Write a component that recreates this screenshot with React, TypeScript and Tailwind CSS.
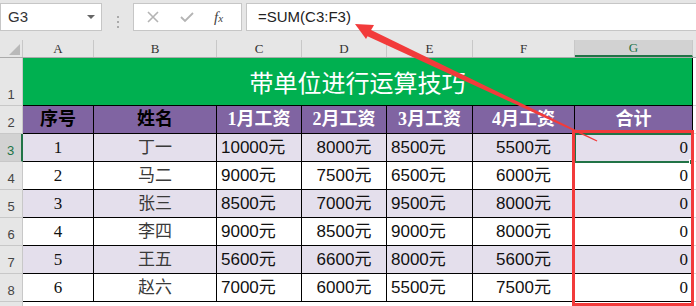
import React from 'react';

const cols = [
  { id: 'A', w: 'w-[71px]' },
  { id: 'B', w: 'w-[123px]' },
  { id: 'C', w: 'w-[85px]' },
  { id: 'D', w: 'w-[85px]' },
  { id: 'E', w: 'w-[86px]' },
  { id: 'F', w: 'w-[102px]' },
  { id: 'G', w: 'w-[118px]' },
];

const heads = [
  { text: '序号', color: 'text-black' },
  { text: '姓名', color: 'text-black' },
  { text: '1月工资', color: 'text-white' },
  { text: '2月工资', color: 'text-white' },
  { text: '3月工资', color: 'text-white' },
  { text: '4月工资', color: 'text-white' },
  { text: '合计', color: 'text-white' },
];

const rows = [
  ['1', '丁一', '10000元', '8000元', '8500元', '5500元'],
  ['2', '马二', '9000元', '7500元', '6500元', '6000元'],
  ['3', '张三', '8500元', '7000元', '9500元', '8000元'],
  ['4', '李四', '9000元', '8500元', '9000元', '8000元'],
  ['5', '王五', '5600元', '6600元', '8000元', '5600元'],
  ['6', '赵六', '7000元', '6000元', '5500元', '7500元'],
];

const serif = "font-['Liberation_Serif','Noto_Sans_CJK_SC',serif]";
const sans = "font-['Liberation_Sans','Noto_Sans_CJK_SC',sans-serif]";

function RowHead({ n, h, active }: { n: string; h: string; active?: boolean }) {
  return (
    <div
      className={`w-[23px] ${h} shrink-0 flex items-end justify-center pb-[1px] border-b border-[#c8c8c8] text-[13px] ${sans} ${
        active
          ? 'bg-[#d2d2d2] text-[#217346] border-r-2 border-r-[#217346]'
          : 'bg-[#e6e6e6] text-[#444] border-r border-r-[#c8c8c8]'
      }`}
    >
      {n}
    </div>
  );
}

export default function App() {
  return (
    <div className="relative w-[696px] h-[306px] overflow-hidden bg-white">
      {/* formula bar */}
      <div className={`h-[40px] bg-[#e6e6e6] flex pt-[3px] ${sans}`}>
        <div className="w-[102px] h-[28px] bg-white border border-[#c6c6c6] flex items-center justify-between pl-[7px] pr-[6px] text-[15px] text-[#333]">
          <span>G3</span>
          <span className="w-0 h-0 border-l-[4px] border-r-[4px] border-t-[4px] border-l-transparent border-r-transparent border-t-[#666]" />
        </div>
        <div className="w-[31px] flex flex-col items-center justify-center gap-[3px]">
          <span className="w-[2px] h-[2px] bg-[#aaa]" />
          <span className="w-[2px] h-[2px] bg-[#aaa]" />
          <span className="w-[2px] h-[2px] bg-[#aaa]" />
        </div>
        <div className="w-[109px] h-[28px] bg-white border border-[#c6c6c6] flex items-center pl-[12px] gap-[19px]">
          <svg width="14" height="14" viewBox="0 0 14 14">
            <path d="M2 2 L12 12 M12 2 L2 12" stroke="#b4b4b4" strokeWidth="1.6" />
          </svg>
          <svg width="16" height="14" viewBox="0 0 16 14">
            <path d="M2 7 L6 11 L14 3" stroke="#b4b4b4" strokeWidth="1.8" fill="none" />
          </svg>
          <span className={`italic text-[15px] text-[#444] ${serif}`}>
            f<span className="text-[11px]">x</span>
          </span>
        </div>
        <div className="ml-[4px] flex-1 h-[28px] bg-white border border-[#c6c6c6] border-r-0 flex items-center pl-[11px] text-[15px] text-[#222]">
          =SUM(C3:F3)
        </div>
      </div>

      {/* column headers */}
      <div className={`flex h-[18px] bg-[#e6e6e6] border-b border-[#ababab] text-[13px] ${serif}`}>
        <div className="w-[23px] shrink-0 border-r border-[#c8c8c8] flex items-end justify-end p-[2px]">
          <svg width="11" height="11" viewBox="0 0 11 11">
            <polygon points="11,0 11,11 0,11" fill="#b9b9b9" />
          </svg>
        </div>
        {cols.map((c) => (
          <div
            key={c.id}
            className={`${c.w} shrink-0 flex items-center justify-center border-r border-[#c8c8c8] ${
              c.id === 'G' ? 'bg-[#d2d2d2] text-[#217346] border-b-2 border-b-[#217346]' : 'text-[#333]'
            }`}
          >
            {c.id}
          </div>
        ))}
        <div className="flex-1" />
      </div>

      {/* row 1 title */}
      <div className="flex">
        <RowHead n="1" h="h-[48px]" />
        <div className="w-[670px] h-[48px] bg-[#00b050] border-b border-r border-black flex items-center justify-center text-white text-[24px] font-['Noto_Sans_CJK_SC',sans-serif]">
          带单位进行运算技巧
        </div>
        <div className="flex-1 border-b border-[#d4d4d4]" />
      </div>

      {/* row 2 headers */}
      <div className="flex">
        <RowHead n="2" h="h-[28px]" />
        {cols.map((c, i) => (
          <div
            key={c.id}
            className={`${c.w} h-[28px] shrink-0 bg-[#8064a2] border-r border-b border-black flex items-center justify-center text-[18px] font-bold ${serif} ${heads[i].color}`}
          >
            {heads[i].text}
          </div>
        ))}
        <div className="flex-1 border-b border-[#d4d4d4]" />
      </div>

      {/* data rows */}
      {rows.map((r, ri) => {
        const bg = ri % 2 === 0 ? 'bg-[#e4dfec]' : 'bg-white';
        return (
          <div key={ri} className="flex">
            <RowHead n={String(ri + 3)} h="h-[28px]" active={ri === 0} />
            <div className={`w-[71px] h-[28px] shrink-0 ${bg} border-r border-b border-black flex items-center justify-center text-[17px] text-[#111] ${serif}`}>
              {r[0]}
            </div>
            <div className={`w-[123px] h-[28px] shrink-0 ${bg} border-r border-b border-black flex items-center justify-center text-[17px] text-[#3a3a3a] ${serif}`}>
              {r[1]}
            </div>
            <div className={`w-[85px] h-[28px] shrink-0 ${bg} border-r border-b border-black flex items-center pl-[4px] text-[17px] text-[#111] ${sans}`}>
              {r[2]}
            </div>
            <div className={`w-[85px] h-[28px] shrink-0 ${bg} border-r border-b border-black flex items-center justify-center text-[17px] text-[#111] ${sans}`}>
              {r[3]}
            </div>
            <div className={`w-[86px] h-[28px] shrink-0 ${bg} border-r border-b border-black flex items-center pl-[4px] text-[17px] text-[#111] ${sans}`}>
              {r[4]}
            </div>
            <div className={`w-[102px] h-[28px] shrink-0 ${bg} border-r border-b border-black flex items-center justify-center text-[17px] text-[#111] ${sans}`}>
              {r[5]}
            </div>
            <div className={`w-[118px] h-[28px] shrink-0 ${bg} border-r border-b border-black flex items-center justify-end pr-[4px] text-[17px] text-[#111] ${serif}`}>
              0
            </div>
            <div className="flex-1 border-b border-[#d4d4d4]" />
          </div>
        );
      })}
      <div className="flex">
        <RowHead n="" h="h-[28px]" />
        <div className="flex-1" />
      </div>

      {/* active cell G3 */}
      <div className="absolute left-[574px] top-[133px] w-[120px] h-[30px] border-2 border-[#217346] pointer-events-none" />
      <div className="absolute left-[689px] top-[159px] w-[6px] h-[6px] bg-[#217346] border border-white" />

      {/* red annotation box */}
      <div className="absolute left-[572px] top-[130px] w-[122px] h-[176px] border-[3px] border-[#f23b3b]" />

      {/* red arrow */}
      <svg className="absolute left-0 top-0 pointer-events-none" width="696" height="306">
        <polygon points="368.5,28.8 365.3,35.2 596.8,141.6 597.3,140.4" fill="#f23b3b" />
        <polygon points="355,24 374,25 366,39" fill="#f23b3b" />
      </svg>
    </div>
  );
}
